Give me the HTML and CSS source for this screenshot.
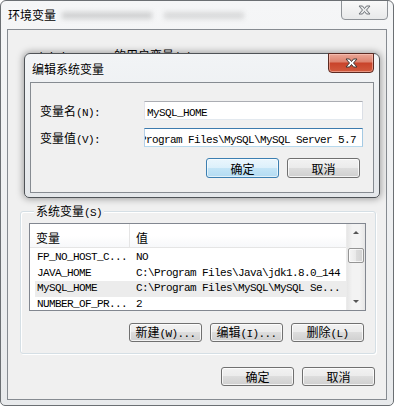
FILE: index.html
```html
<!DOCTYPE html>
<html lang="zh-CN">
<head>
    <meta charset="UTF-8">
    <title>环境变量</title>
    <link rel="stylesheet" href="styles.css">
</head>
<body>
<div class="window">
    <div class="titlebar">
        <span class="title">环境变量</span>
        <span class="ghost ghost-a"></span>
        <span class="ghost ghost-b"></span>
        <div class="close close-idle">
            <svg width="13" height="10" viewBox="-1 -1 13 10"><polygon points="0,0 3.5,0 5.5,2.5 7.5,0 11,0 7.5,4 11,8 7.5,8 5.5,5.5 3.5,8 0,8 3.5,4" fill="#e9eaeb" stroke="#6f7378" stroke-width="1"/></svg>
        </div>
    </div>

    <div class="client">
        <div class="user-area">
            <div class="user-title"><span class="a">Administrator </span>的用户变量<span class="a">(U)</span></div>
        </div>

        <div class="group">
            <div class="group-title"><span>系统变量<span class="a">(S)</span></span></div>
            <div class="list">
                <div class="list-main">
                    <div class="list-head">
                        <div class="hcell first">变量</div>
                        <div class="hcell">值</div>
                    </div>
                    <div class="rows">
                        <div class="row"><span>FP_NO_HOST_C...</span><span>NO</span></div>
                        <div class="row"><span>JAVA_HOME</span><span>C:\Program Files\Java\jdk1.8.0_144</span></div>
                        <div class="row sel"><span>MySQL_HOME</span><span>C:\Program Files\MySQL\MySQL Se...</span></div>
                        <div class="row"><span>NUMBER_OF_PR...</span><span>2</span></div>
                    </div>
                </div>
                <div class="scrollbar">
                    <div class="sb-arrow up"></div>
                    <div class="sb-track"><div class="sb-thumb"></div></div>
                    <div class="sb-arrow down"></div>
                </div>
            </div>
            <div class="btn-row group-btns">
                <button class="btn">新建<span class="a">(W)...</span></button>
                <button class="btn">编辑<span class="a">(I)...</span></button>
                <button class="btn">删除<span class="a">(L)</span></button>
            </div>
        </div>

        <div class="btn-row footer-btns">
            <button class="btn">确定</button>
            <button class="btn">取消</button>
        </div>
    </div>

    <!-- edit dialog sits on top of the parent window -->
    <div class="dialog">
        <div class="titlebar dlg-titlebar">
            <span class="title">编辑系统变量</span>
            <div class="close close-hot">
                <svg width="13" height="10" viewBox="-1 -1 13 10"><polygon points="0,0 3.5,0 5.5,2.5 7.5,0 11,0 7.5,4 11,8 7.5,8 5.5,5.5 3.5,8 0,8 3.5,4" fill="#ffffff" stroke="#3e3a39" stroke-width="1"/></svg>
            </div>
        </div>
        <div class="dlg-client">
            <div class="field">
                <label class="field-label">变量名<span class="a">(N):</span></label>
                <div class="textbox"><span class="a">MySQL_HOME</span></div>
            </div>
            <div class="field">
                <label class="field-label">变量值<span class="a">(V):</span></label>
                <div class="textbox focus"><span class="a shift">C:\Program Files\MySQL\MySQL Server 5.7</span></div>
            </div>
            <div class="btn-row dlg-btns">
                <button class="btn default">确定</button>
                <button class="btn">取消</button>
            </div>
        </div>
    </div>
</div>
</body>
</html>
```

FILE: styles.css
```css
body {
    margin: 0;
    font-family: "Noto Sans CJK SC", sans-serif;
    font-size: 12px;
    color: #000;
}

/* ascii text in the dialogs (SimSun-like fixed width) */
.a {
    font-family: "Liberation Mono", monospace;
    font-size: 11px;
    letter-spacing: -0.6px;
}

.window {
    position: relative;
    width: 394px;
    height: 406px;
    box-sizing: border-box;
    border: 1px solid #6b6f73;
    border-radius: 6px 6px 5px 5px;
    background: linear-gradient(#f5f6f7, #e8eaec);
    overflow: hidden;
}

.titlebar {
    position: relative;
    height: 28px;
    box-sizing: border-box;
    padding: 5px 0 0 7px;
    display: flex;
    align-items: flex-start;
    line-height: 17px;
}

.title {
    text-shadow: 0 0 6px #fff;
}

.ghost {
    display: inline-block;
    height: 7px;
    margin-top: 6px;
    background: rgba(60, 60, 60, 0.2);
    filter: blur(2.5px);
}

.ghost-a {
    width: 90px;
    margin-left: 6px;
}

.ghost-b {
    width: 80px;
    margin-left: 12px;
    background: rgba(60, 60, 60, 0.15);
}

.close {
    position: absolute;
    top: -1px;
    right: 5px;
    width: 47px;
    height: 20px;
    box-sizing: border-box;
    border-radius: 0 0 4px 4px;
    display: flex;
    align-items: center;
    justify-content: center;
}

.close-idle {
    border: 1px solid #8e9297;
    background: linear-gradient(#f9f9f9, #e8e9ea);
}

.close-hot {
    width: 46px;
    border: 1px solid #5b2a22;
    background: linear-gradient(#eaa797 0%, #de8470 42%, #c9442b 52%, #d25a3e 100%);
    box-shadow: inset 0 0 0 1px rgba(255, 210, 200, 0.5);
}

.client {
    margin: 0 6px;
    height: 371px;
    box-sizing: border-box;
    border: 1px solid #868b91;
    background: #f0f0f0;
}

.user-area {
    height: 181px;
}

.user-title {
    padding: 18px 0 0 22px;
    line-height: 14px;
}

.group {
    margin: 0 10px 0 12px;
    border: 1px solid #d5dfe5;
    border-radius: 3px;
    padding: 0 9px 11px 8px;
    box-shadow: inset 1px 1px 0 #fff, 1px 1px 0 #fff;
}

.group-title {
    height: 14px;
    margin-top: -8px;
    padding-left: 5px;
    line-height: 14px;
}

.group-title > span {
    background: #f0f0f0;
    padding: 0 2px;
}

.list {
    margin-top: 5px;
    height: 88px;
    box-sizing: border-box;
    border: 1px solid #828790;
    background: #fff;
    display: flex;
}

.list-main {
    flex: 1;
    overflow: hidden;
}

.list-head {
    height: 23px;
    display: flex;
    border-bottom: 1px solid #e5e5e5;
    background: linear-gradient(#fff, #fff 50%, #f7f8fa);
}

.hcell {
    padding: 5px 0 0 6px;
    line-height: 17px;
}

.hcell.first {
    width: 100px;
    box-sizing: border-box;
    border-right: 1px solid #e5e5e5;
}

.rows {
    padding-top: 2px;
    font-family: "Liberation Mono", monospace;
    font-size: 11px;
    letter-spacing: -0.6px;
}

.row {
    display: grid;
    grid-template-columns: 94px 1fr;
    margin-left: 5px;
    height: 15.67px;
    line-height: 15.67px;
    white-space: nowrap;
}

.row span {
    overflow: hidden;
    padding-left: 7px;
}

.row span:first-child {
    padding-left: 2px;
}

.row.sel {
    background: #ececec;
}

.scrollbar {
    width: 19px;
    box-sizing: border-box;
    border-left: 1px solid #ebebeb;
    display: flex;
    flex-direction: column;
    background: linear-gradient(to right, #e6e6e6, #f3f3f3 30%, #f3f3f3 70%, #e6e6e6);
}

.sb-arrow {
    height: 17px;
    display: flex;
    align-items: center;
    justify-content: center;
}

.sb-arrow::before {
    content: "";
    border-left: 3px solid transparent;
    border-right: 3px solid transparent;
    border-bottom: 3px solid #555;
}

.sb-arrow.down::before {
    border-bottom: 0;
    border-top: 3px solid #555;
}

.sb-track {
    flex: 1;
    padding: 7px 1px 0;
}

.sb-thumb {
    height: 15px;
    box-sizing: border-box;
    border: 1px solid #959595;
    border-radius: 2px;
    background: linear-gradient(to right, #f5f5f5, #e9e9e9 50%, #dcdcdc 51%, #d2d2d2);
    box-shadow: inset 0 0 0 1px rgba(255, 255, 255, 0.7);
}

.btn-row {
    display: flex;
    justify-content: flex-end;
    gap: 8px;
}

.group-btns {
    margin-top: 12px;
    padding-right: 2px;
}

.footer-btns {
    margin-top: 13px;
    padding-right: 11px;
}

.btn {
    width: 73px;
    height: 19px;
    padding: 0;
    border: 1px solid #707070;
    border-radius: 3px;
    background: linear-gradient(#f2f2f2, #ebebeb 49%, #dddddd 50%, #cfcfcf);
    box-shadow: inset 0 0 0 1px rgba(255, 255, 255, 0.75);
    font-family: "Noto Sans CJK SC", sans-serif;
    font-size: 12px;
    line-height: 15px;
    color: #000;
}

.btn.default {
    border-color: #3c7fb1;
    background: linear-gradient(#eaf6fd, #dcf0fb 49%, #c4e5f7 50%, #b3dbf2);
    box-shadow: inset 0 0 0 1px rgba(255, 255, 255, 0.6);
}

.dialog {
    position: absolute;
    left: 23px;
    top: 52px;
    width: 356px;
    height: 145px;
    box-sizing: border-box;
    border: 1px solid #4f5357;
    border-radius: 6px 6px 5px 5px;
    background: linear-gradient(#f2f4f6, #e4e7ea);
    box-shadow: 0 0 7px 1px rgba(0, 0, 0, 0.35);
}

.dlg-titlebar {
    padding-top: 6px;
}

.dlg-client {
    margin: 0 5px;
    height: 111px;
    box-sizing: border-box;
    border: 1px solid #868b91;
    background: #f0f0f0;
    padding: 18px 10px 0 9px;
}

.field {
    display: flex;
    align-items: center;
}

.field + .field {
    margin-top: 8px;
}

.field-label {
    width: 104px;
}

.textbox {
    width: 219px;
    height: 19px;
    box-sizing: border-box;
    border: 1px solid;
    border-color: #abadb3 #dbdfe6 #e3e9ef #e2e3ea;
    background: #fff;
    padding-left: 2px;
    overflow: hidden;
    white-space: nowrap;
    line-height: 17px;
}

.textbox.focus {
    border-color: #3d7bad #a4c9e3 #b7d9ed #b5cfe7;
}

.shift {
    display: inline-block;
    margin-left: -25px;
}

.dlg-btns {
    margin-top: 11px;
    padding-right: 3px;
}

.dlg-btns .btn {
    height: 20px;
}
```
